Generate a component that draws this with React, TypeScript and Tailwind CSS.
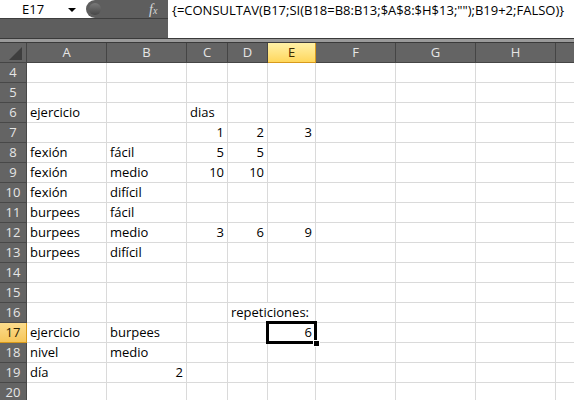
import React from "react";

const cols = ["A", "B", "C", "D", "E", "F", "G", "H", ""];

const data: Record<number, (string | number | null)[]> = {
  6: ["ejercicio", null, "dias"],
  7: [null, null, 1, 2, 3],
  8: ["fexión", "fácil", 5, 5],
  9: ["fexión", "medio", 10, 10],
  10: ["fexión", "difícil"],
  11: ["burpees", "fácil"],
  12: ["burpees", "medio", 3, 6, 9],
  13: ["burpees", "difícil"],
  16: [null, null, null, "repeticiones:"],
  17: ["ejercicio", "burpees", null, null, 6],
  18: ["nivel", "medio"],
  19: ["día", 2],
};

const rows = Array.from({ length: 17 }, (_, i) => i + 4);

export default function App() {
  const font = { fontFamily: '"Open Sans", "Liberation Sans", sans-serif' };
  return (
    <div
      className="w-[574px] h-[400px] overflow-hidden bg-white text-black"
      style={font}
    >
      {/* Formula bar */}
      <div className="flex h-[38px]">
        <div className="flex w-[168px] flex-col">
          <div className="flex h-[18px] bg-white">
            <div className="relative w-[86px] text-[13px] leading-[18px]">
              <span className="absolute left-[22px] top-[0px]">E17</span>
              <span className="absolute left-[68px] top-[8px] h-0 w-0 border-x-[4px] border-t-[4px] border-x-transparent border-t-black" />
            </div>
            <div className="relative flex-1 rounded-l-[9px] bg-[#5e5e5e]">
              <span className="absolute left-[3px] top-[3px] h-[12px] w-[12px] rounded-full bg-gradient-to-b from-[#7a7a7a] to-[#484848]" />
              <span
                className="absolute left-[63px] top-[-1px] text-[14px] italic text-[#d8d8d8]"
                style={{ fontFamily: '"Liberation Serif", serif' }}
              >
                f<span className="text-[10px]">x</span>
              </span>
            </div>
          </div>
          <div className="h-[20px] border-t border-[#3e3e3e] bg-[#5e5e5e]" />
        </div>
        <div className="flex-1 bg-white pl-[4px] text-[13px] leading-[20px] whitespace-nowrap">
          {'{=CONSULTAV(B17;SI(B18=B8:B13;$A$8:$H$13;"");B19+2;FALSO)}'}
        </div>
      </div>
      {/* separator */}
      <div className="h-[5px] border-y border-[#3a3a3a] bg-[#9a9a9a]" />

      {/* Grid */}
      <div className="grid grid-cols-[27px_80px_80px_41px_40px_48px_80px_80px_80px_1fr] text-[13px]">
        {/* header row */}
        <div className="relative h-[20px] border-r border-b border-[#454545] bg-[#646464]">
          <svg className="absolute left-[9px] top-[4px]" width="13" height="13" viewBox="0 0 13 13">
            <polygon points="13,0 13,13 0,13" fill="#3e3e3e" />
          </svg>
        </div>
        {cols.map((c, i) => (
          <div
            key={c + i}
            className={
              "h-[20px] border-b text-center text-[13px] leading-[19px] " +
              (c === "E"
                ? "border-r border-[#d89a1c] bg-gradient-to-b from-[#fff1a6] to-[#ffd75a] text-[#3a2a00]"
                : i === 8
                ? "border-[#454545] bg-[#646464] text-[#e6e6e6]"
                : "border-r border-[#454545] bg-[#646464] text-[#e6e6e6]")
            }
          >
            {c}
          </div>
        ))}
        {rows.map((r) => {
          const rd = data[r] || [];
          return (
            <React.Fragment key={r}>
              <div
                className={
                  "h-[20px] border-r border-b text-center text-[13px] leading-[19px] " +
                  (r === 17
                    ? "border-[#d89a1c] bg-gradient-to-b from-[#fbdc8c] to-[#f6c65a] text-[#2a2000]"
                    : "border-[#484848] bg-[#646464] text-[#e6e6e6]")
                }
              >
                {r}
              </div>
              {cols.map((c, ci) => {
                const v = rd[ci];
                const isNum = typeof v === "number";
                const noRight = r === 16 && ci === 3;
                const selected = r === 17 && ci === 4;
                return (
                  <div
                    key={r + "-" + ci}
                    className={
                      "relative h-[20px] border-b border-[#dadada] leading-[19px] whitespace-nowrap " +
                      (noRight || ci === 8 ? "" : "border-r ") +
                      (isNum ? "pr-[3px] text-right" : "pl-[3px] text-left")
                    }
                  >
                    {v !== null && v !== undefined ? String(v) : ""}
                    {selected && (
                      <>
                        <span className="absolute z-10 left-[-2px] top-[-2px] right-[-2px] bottom-[-2px] border-[3px] border-black" />
                        <span className="absolute z-20 right-[-5px] bottom-[-5px] h-[7px] w-[7px] border border-white bg-black" />
                      </>
                    )}
                  </div>
                );
              })}
            </React.Fragment>
          );
        })}
      </div>
    </div>
  );
}
